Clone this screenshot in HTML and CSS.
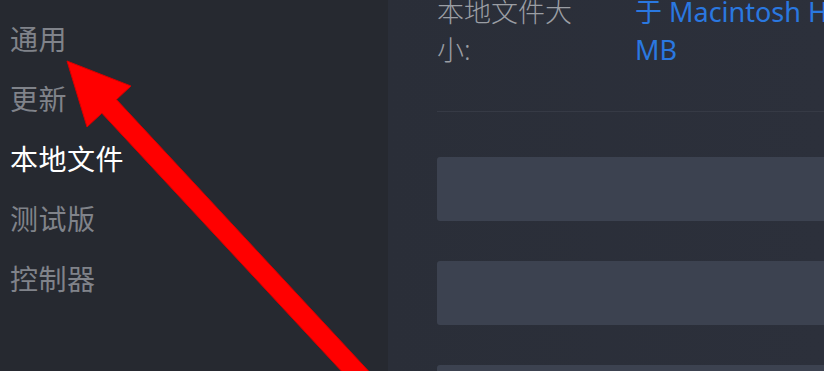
FILE: index.html
```html
<!DOCTYPE html>
<html>
<head>
  <meta charset="utf-8">
  <title>设置 - 本地文件</title>
  <link rel="stylesheet" href="styles.css">
</head>
<body>
  <div class="settings">
    <nav class="sidebar">
      <div class="nav-item">通用</div>
      <div class="nav-item">更新</div>
      <div class="nav-item active">本地文件</div>
      <div class="nav-item">测试版</div>
      <div class="nav-item">控制器</div>
    </nav>

    <main class="panel">
      <div class="info-row">
        <div class="info-label">本地文件大小:</div>
        <div class="info-value">于 Macintosh HD 上占用 2,468<br>MB</div>
      </div>
      <div class="divider"></div>
      <div class="field"></div>
      <div class="field"></div>
      <div class="field"></div>
    </main>
  </div>

  <!-- annotation arrow drawn over the screenshot -->
  <svg class="arrow" width="824" height="371" viewBox="0 0 824 371">
    <polygon points="67,61 131,86 116.5,99.6 387.3,391.2 372.7,404.8 101.9,113.2 87,127"
             fill="#ff0000" stroke="#d40000" stroke-width="1" stroke-linejoin="round"/>
  </svg>
</body>
</html>
```

FILE: styles.css
```css
* {
  margin: 0;
  padding: 0;
  box-sizing: border-box;
}

body {
  width: 824px;
  height: 371px;
  overflow: hidden;
  background: #2b2f3a;
  font-family: "Noto Sans", "Noto Sans CJK SC", sans-serif;
  position: relative;
}

.settings {
  display: flex;
  height: 100%;
}

.sidebar {
  width: 388px;
  flex-shrink: 0;
  background: #262930;
  padding: 9px 0 0 10px;
}

.nav-item {
  font-size: 28px;
  line-height: 60px;
  color: #80838a;
  letter-spacing: 0.5px;
}

.nav-item.active {
  color: #ffffff;
}

.panel {
  flex: 1;
  min-width: 0;
  overflow: hidden;
  padding-left: 49px;
  background: linear-gradient(90deg, #2a2e38 0%, #2c303b 100%);
}

.info-row {
  display: flex;
  margin-top: -7px;
  font-size: 27px;
  line-height: 38px;
}

.info-label {
  width: 150px;
  flex-shrink: 0;
  margin-right: 48px;
  color: #9b9ea4;
  font-weight: 300;
}

.info-value {
  color: #2a78e0;
  white-space: nowrap;
}

.divider {
  height: 1px;
  background: #363a45;
  margin-top: 42px;
}

.field {
  height: 64px;
  margin-top: 45px;
  background: #3c4250;
  border-radius: 3px 0 0 3px;
  margin-right: -4px;
}

.field + .field {
  margin-top: 40px;
}

.arrow {
  position: absolute;
  top: 0;
  left: 0;
  pointer-events: none;
}
```
